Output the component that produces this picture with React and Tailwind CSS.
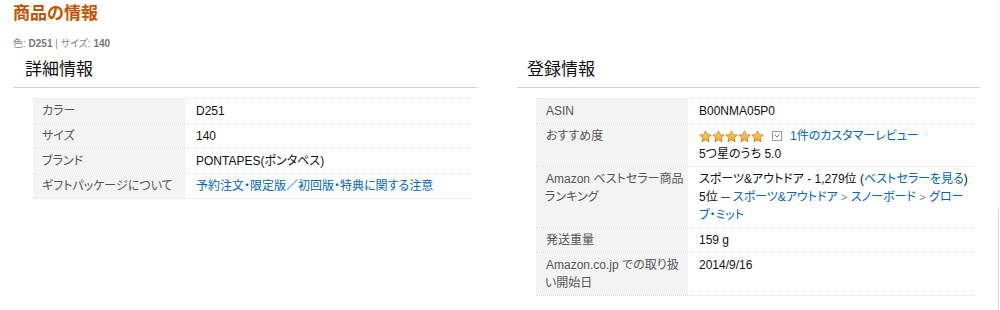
import React from "react";

const font = { fontFamily: '"Liberation Sans", Arial, "Noto Sans CJK JP", sans-serif' };

function Star() {
  return (
    <svg width="13" height="13" viewBox="0 0 24 23" className="block">
      <defs>
        <linearGradient id="sg" x1="0" y1="0" x2="0" y2="1">
          <stop offset="0" stopColor="#ffd57a" />
          <stop offset="1" stopColor="#f0a020" />
        </linearGradient>
      </defs>
      <path
        d="M12 1.2l3.2 6.8 7.4.9-5.5 5.1 1.5 7.4L12 17.7l-6.6 3.7 1.5-7.4L1.4 8.9l7.4-.9z"
        fill="url(#sg)"
        stroke="#c87a10"
        strokeWidth="1.4"
        strokeLinejoin="round"
      />
    </svg>
  );
}

function Row({ label, children, last }) {
  return (
    <div className={"flex border-t border-dotted border-[#dedede] " + (last ? "border-b" : "")}>
      <div className="w-[152px] shrink-0 bg-[#f3f3f3] pl-[9px] pt-[3px] pb-[3px] text-[#555] leading-[18px] whitespace-nowrap">
        {label}
      </div>
      <div className="flex-1 pl-[11px] pt-[3px] pb-[3px] text-[#111] leading-[18px] whitespace-nowrap">
        {children}
      </div>
    </div>
  );
}

const Link = ({ children }) => <span className="text-[#0066c0]">{children}</span>;

export default function App() {
  return (
    <div className="relative w-[1000px] h-[310px] bg-white overflow-hidden [font-feature-settings:'palt']" style={font}>
      <div className="absolute right-[1px] top-0 h-[310px] w-[1px] bg-[linear-gradient(to_bottom,#f3f3f3_0,#f3f3f3_210px,#d8d8d8_210px)]" />
      <div className="pl-[13px] pt-[2px]">
        <div className="text-[17px] leading-[24px] font-bold text-[#c45500] [font-feature-settings:normal]">商品の情報</div>
        <div className="mt-[11px] text-[10px] leading-[14px] text-[#888]">
          色: <span className="font-bold text-[#777]">D251</span> | サイズ: <span className="font-bold text-[#777]">140</span>
        </div>
      </div>
      <div className="flex pl-[14px] gap-[40px] text-[12px]">
        <div className="w-[463px]">
          <div className="mt-[7px] border-b border-[#cfcfcf] pl-[11px] pb-[5px] text-[17px] leading-[24px] text-[#111] [font-feature-settings:normal]">詳細情報</div>
          <div className="mt-[10px] ml-[19px] w-[438px]">
            <Row label="カラー">D251</Row>
            <Row label="サイズ">140</Row>
            <Row label="ブランド">PONTAPES(ポンタペス)</Row>
            <Row label="ギフトパッケージについて" last>
              <Link>予約注文・限定版／初回版・特典に関する注意</Link>
            </Row>
          </div>
        </div>
        <div className="w-[463px]">
          <div className="mt-[7px] border-b border-[#cfcfcf] pl-[10px] pb-[5px] text-[17px] leading-[24px] text-[#111] [font-feature-settings:normal]">登録情報</div>
          <div className="mt-[10px] ml-[19px] w-[438px]">
            <Row label={<span className="pl-[1px]">ASIN</span>}>B00NMA05P0</Row>
            <Row label={<span className="pl-[1px]">おすすめ度</span>}>
              <div className="flex items-center h-[18px]">
                <div className="flex">
                  <Star /><Star /><Star /><Star /><Star />
                </div>
                <span className="ml-[8px] w-[10px] h-[10px] border border-[#999] flex items-center justify-center">
                  <svg width="6" height="4" viewBox="0 0 6 4"><path d="M0.5 0.5L3 3L5.5 0.5" fill="none" stroke="#777" strokeWidth="1" /></svg>
                </span>
                <span className="ml-[8px]"><Link>1件のカスタマーレビュー</Link></span>
              </div>
              <div>5つ星のうち 5.0</div>
            </Row>
            <Row label={<span className="pl-[1px]">Amazon ベストセラー商品<br />ランキング</span>}>
              スポーツ&amp;アウトドア - 1,279位 (<Link>ベストセラーを見る</Link>)
              <br />
              5位 ─ <Link>スポーツ&amp;アウトドア</Link> <span className="text-[#888] text-[11px]">&gt;</span> <Link>スノーボード</Link>{" "}
              <span className="text-[#888] text-[11px]">&gt;</span> <Link>グロー<br />ブ・ミット</Link>
            </Row>
            <Row label={<span className="pl-[1px]">発送重量</span>}>159 g</Row>
            <Row label={<span className="pl-[1px]">Amazon.co.jp での取り扱<br />い開始日</span>} last>2014/9/16</Row>
          </div>
        </div>
      </div>
    </div>
  );
}
